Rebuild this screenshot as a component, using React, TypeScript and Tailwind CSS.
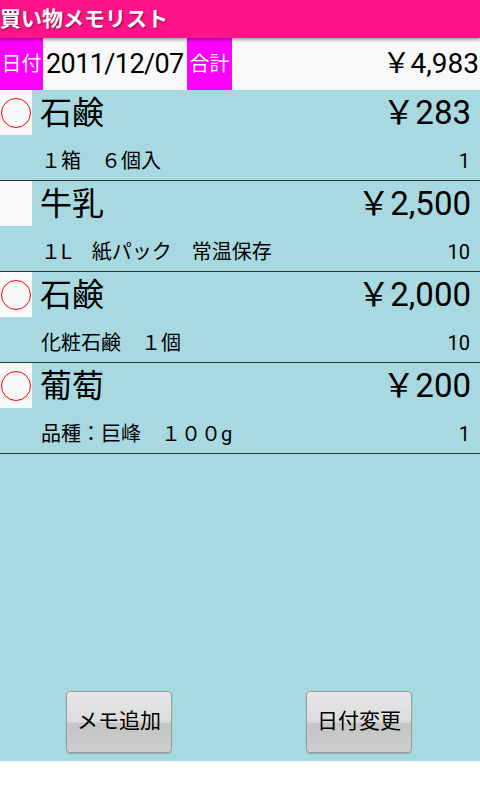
const FONT = "font-['Roboto','Noto_Sans_CJK_JP',sans-serif]";

const ITEMS = [
  { id: 1, name: "石鹸", price: "￥283", note: "１箱　６個入", qty: "1", done: false },
  { id: 2, name: "牛乳", price: "￥2,500", note: "１L　紙パック　常温保存", qty: "10", done: true },
  { id: 3, name: "石鹸", price: "￥2,000", note: "化粧石鹸　１個", qty: "10", done: false },
  { id: 4, name: "葡萄", price: "￥200", note: "品種：巨峰　１００g", qty: "1", done: false },
];

const App = () => {
  return (
    <div className={`w-[480px] h-[800px] bg-white flex flex-col ${FONT}`}>
      <div className="h-[38px] bg-[#fe1489] flex items-center shadow-[0_2px_3px_rgba(0,0,0,0.35)] z-10">
        <h1 className="text-white text-[21px] font-bold leading-none [text-shadow:1px_1px_2px_rgba(0,0,0,0.5)]">
          買い物メモリスト
        </h1>
      </div>

      <div className="h-[52px] bg-[#f8f8f8] flex items-stretch">
        <div className="w-[43px] bg-[#ff00ff] text-white text-[20px] flex items-center justify-center">日付</div>
        <div className="w-[144px] text-black text-[27px] tracking-[-0.6px] flex items-center pl-[3px] whitespace-nowrap">2011/12/07</div>
        <div className="w-[45px] bg-[#ff00ff] text-white text-[20px] flex items-center justify-center">合計</div>
        <div className="flex-1 text-black text-[28px] flex items-center justify-end pr-[1px]">￥4,983</div>
      </div>

      <div className="h-[671px] bg-[#a8d9e0] flex flex-col">
        {ITEMS.map((item) => (
          <div key={item.id} className="h-[91px] border-b border-[#333] flex flex-col">
            <div className="h-[45px] flex items-center">
              <div className="w-[32px] h-[45px] bg-[#f8f8f8] flex items-center justify-center">
                {!item.done && <div className="w-[30px] h-[30px] rounded-full border border-[#ff0000]" />}
              </div>
              <span className="ml-[8px] text-[32px] text-black leading-none">{item.name}</span>
              <span className="ml-auto mr-[9px] text-[33px] text-black leading-none">{item.price}</span>
            </div>
            <div className="flex-1 flex items-center pt-[6px]">
              <span className="ml-[41px] text-[20px] text-black leading-none">{item.note}</span>
              <span className="ml-auto mr-[10px] text-[20px] text-black leading-none">{item.qty}</span>
            </div>
          </div>
        ))}

        <div className="mt-auto mb-[8px] grid grid-cols-2">
          {["メモ追加", "日付変更"].map((label) => (
            <div key={label} className="flex justify-center">
              <button className="w-[106px] h-[62px] -translate-x-[1px] rounded-[4px] border border-[#9a9a9a] bg-[linear-gradient(#e6e6e6_0%,#dcdcdc_50%,#c4c4c4_52%,#cdcdcd_100%)] text-[21px] text-black shadow-[0_1px_1px_rgba(0,0,0,0.2)]">
                {label}
              </button>
            </div>
          ))}
        </div>
      </div>
    </div>
  );
};

export default App;
